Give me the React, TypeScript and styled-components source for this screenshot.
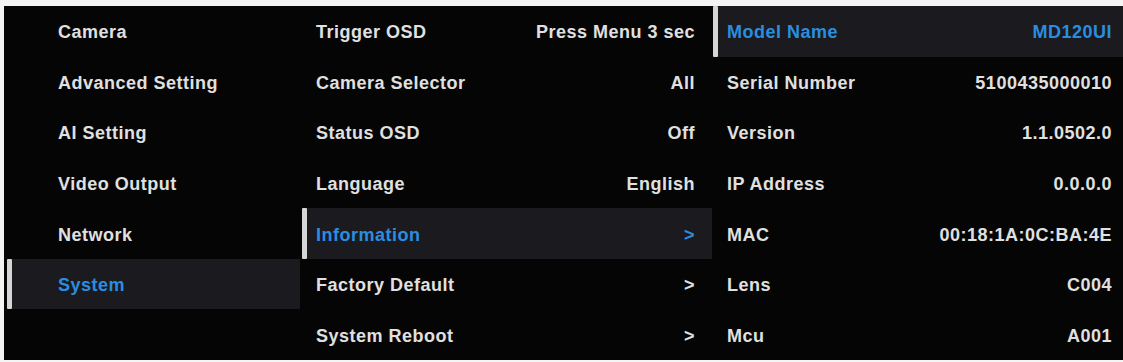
import React from "react";
import styled, { createGlobalStyle } from "styled-components";

const Global = createGlobalStyle`
  html, body { margin: 0; padding: 0; background: #f4f4f4; }
  body { width: 1123px; height: 362px; overflow: hidden; }
  #root { width: 1123px; height: 362px; }
`;

const Frame = styled.div`
  margin: 6px 0 2px 4px;
  height: 354px;
  width: 1119px;
  background: #050505;
  display: grid;
  grid-template-columns: 296px 412px 411px;
  font-family: "Liberation Sans", Arial, sans-serif;
  font-weight: 700;
  font-size: 18px;
  letter-spacing: 0.5px;
  color: #e0e0e0;
`;

const Column = styled.div`
  display: grid;
  grid-template-rows: repeat(7, 1fr);
`;

const Row = styled.div<{ $markerOffset: number }>`
  display: flex;
  align-items: stretch;
  padding-left: ${(p) => p.$markerOffset}px;
  min-height: 0;
`;

const Marker = styled.div<{ $active?: boolean }>`
  width: 5px;
  flex: none;
  background: ${(p) => (p.$active ? "#d6d6d6" : "transparent")};
  border-radius: 1px;
`;

const Body = styled.div<{ $active?: boolean; $padL: number; $padR: number }>`
  flex: 1;
  display: flex;
  align-items: center;
  justify-content: space-between;
  padding: 3px ${(p) => p.$padR}px 0 ${(p) => p.$padL}px;
  background: ${(p) => (p.$active ? "#1b1a1e" : "transparent")};
  color: ${(p) => (p.$active ? "#2a8ee0" : "inherit")};
  white-space: nowrap;
`;

const Label = styled.span``;
const Value = styled.span``;

type Item = { label: string; value?: string; active?: boolean };

const col1: Item[] = [
  { label: "Camera" },
  { label: "Advanced Setting" },
  { label: "AI Setting" },
  { label: "Video Output" },
  { label: "Network" },
  { label: "System", active: true },
  { label: "" },
];

const col2: Item[] = [
  { label: "Trigger OSD", value: "Press Menu 3 sec" },
  { label: "Camera Selector", value: "All" },
  { label: "Status OSD", value: "Off" },
  { label: "Language", value: "English" },
  { label: "Information", value: ">", active: true },
  { label: "Factory Default", value: ">" },
  { label: "System Reboot", value: ">" },
];

const col3: Item[] = [
  { label: "Model Name", value: "MD120UI", active: true },
  { label: "Serial Number", value: "5100435000010" },
  { label: "Version", value: "1.1.0502.0" },
  { label: "IP Address", value: "0.0.0.0" },
  { label: "MAC", value: "00:18:1A:0C:BA:4E" },
  { label: "Lens", value: "C004" },
  { label: "Mcu", value: "A001" },
];

function Menu({
  items,
  offset,
  padL,
  padR,
}: {
  items: Item[];
  offset: number;
  padL: number;
  padR: number;
}) {
  return (
    <Column>
      {items.map((it, i) => (
        <Row key={i} $markerOffset={offset}>
          <Marker $active={it.active} />
          <Body $active={it.active} $padL={padL} $padR={padR}>
            <Label>{it.label}</Label>
            {it.value !== undefined && <Value>{it.value}</Value>}
          </Body>
        </Row>
      ))}
    </Column>
  );
}

export default function App() {
  return (
    <>
      <Global />
      <Frame>
        <Menu items={col1} offset={3} padL={46} padR={0} />
        <Menu items={col2} offset={2} padL={9} padR={17} />
        <Menu items={col3} offset={1} padL={9} padR={11} />
      </Frame>
    </>
  );
}
